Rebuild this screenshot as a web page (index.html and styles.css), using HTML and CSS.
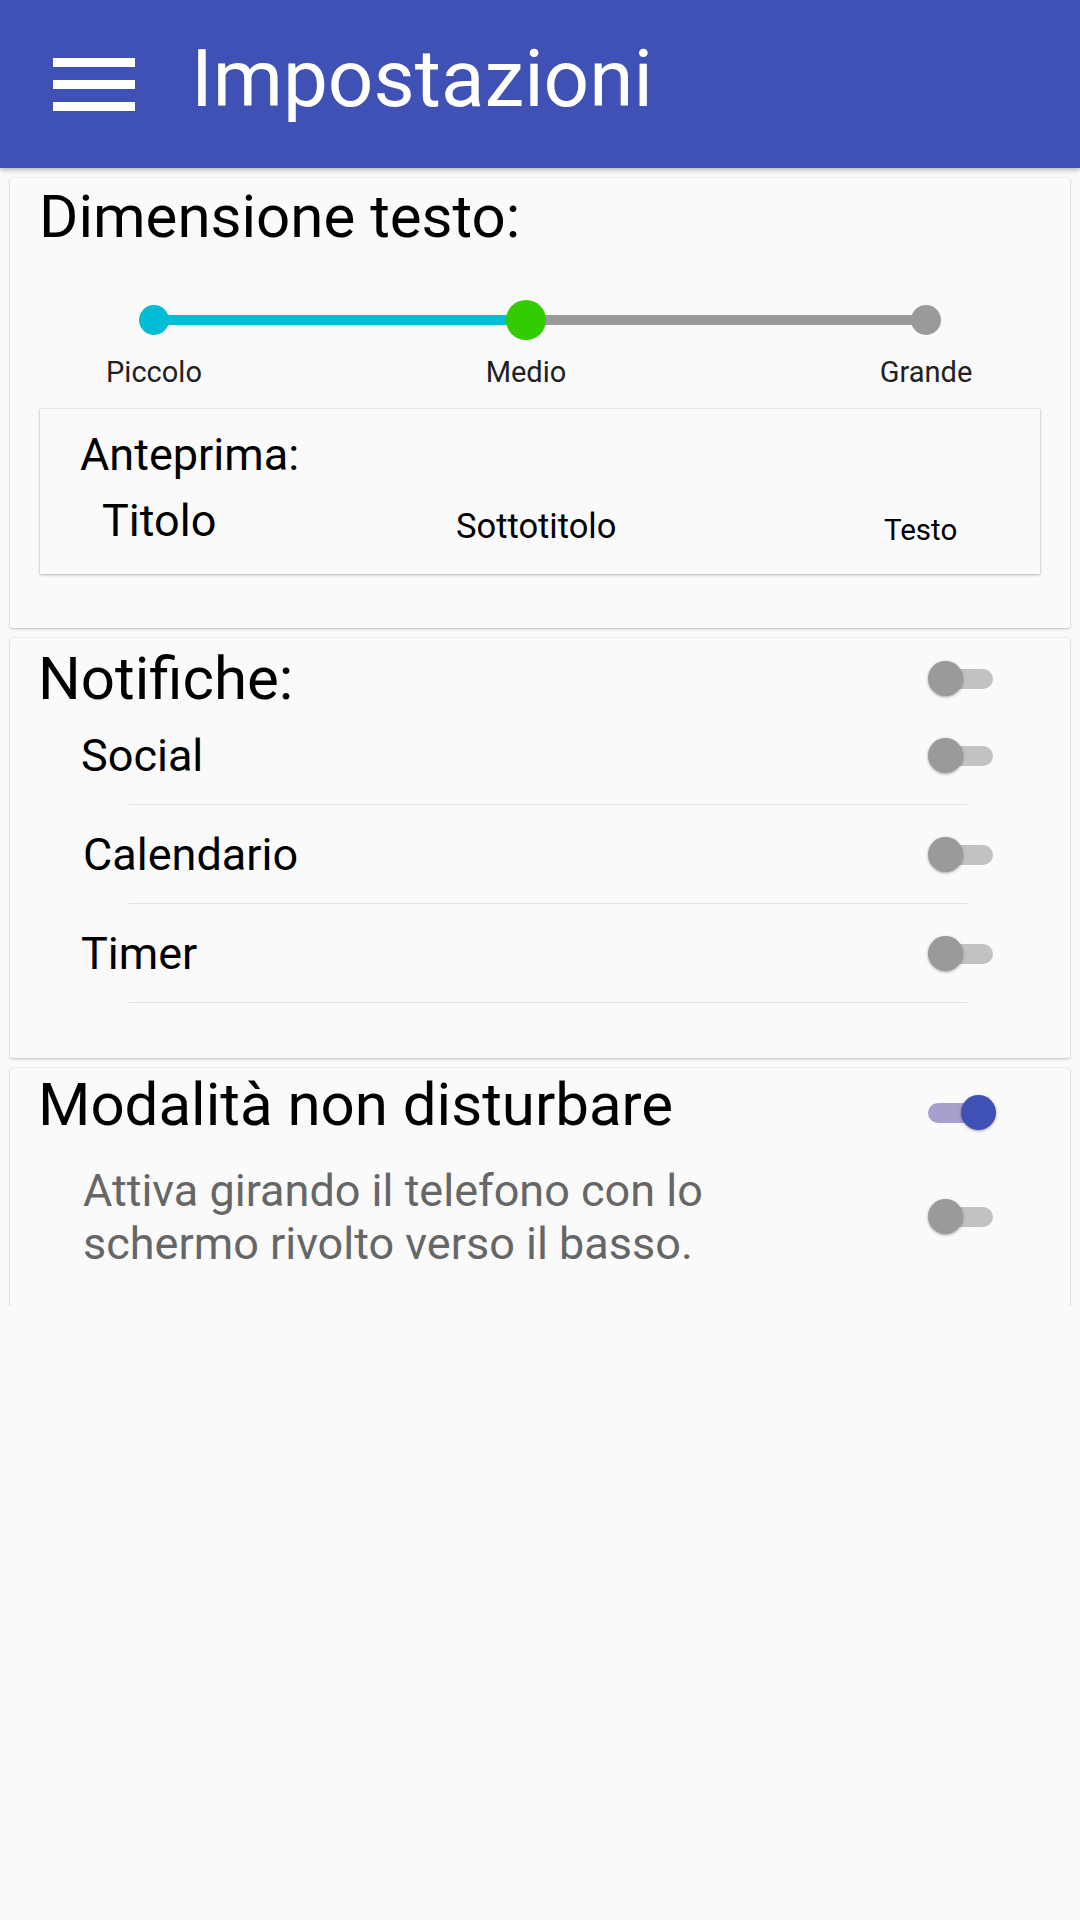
FILE: index.html
```html
<!DOCTYPE html>
<html lang="it">
<head>
<meta charset="utf-8">
<title>Impostazioni</title>
<link rel="stylesheet" href="styles.css">
</head>
<body>
<header class="appbar">
  <div class="menu" aria-label="menu"><span></span><span></span><span></span></div>
  <h1 class="appbar-title">Impostazioni</h1>
</header>

<main class="content">
  <section class="card card-size">
    <h2 class="card-heading">Dimensione testo:</h2>
    <div class="slider">
      <div class="slider-fill" style="width:48.19%"></div>
      <span class="dot dot-start"></span>
      <span class="dot dot-current" style="left:48.19%"></span>
      <span class="dot dot-end"></span>
    </div>
    <div class="slider-labels">
      <span class="lbl">Piccolo</span>
      <span class="lbl lbl-mid">Medio</span>
      <span class="lbl lbl-end">Grande</span>
    </div>
    <div class="preview">
      <div class="preview-label">Anteprima:</div>
      <div class="preview-row">
        <span class="pv-title">Titolo</span>
        <span class="pv-subtitle">Sottotitolo</span>
        <span class="pv-text">Testo</span>
      </div>
    </div>
  </section>

  <section class="card card-notif">
    <div class="head-row">
      <h2 class="card-heading">Notifiche:</h2>
      <span class="switch"><span class="track"></span><span class="thumb"></span></span>
    </div>
    <div class="item">
      <span class="item-label">Social</span>
      <span class="switch"><span class="track"></span><span class="thumb"></span></span>
    </div>
    <div class="divider"></div>
    <div class="item">
      <span class="item-label cal">Calendario</span>
      <span class="switch"><span class="track"></span><span class="thumb"></span></span>
    </div>
    <div class="divider"></div>
    <div class="item">
      <span class="item-label">Timer</span>
      <span class="switch"><span class="track"></span><span class="thumb"></span></span>
    </div>
    <div class="divider"></div>
  </section>

  <section class="card card-dnd">
    <div class="head-row dnd-head">
      <h2 class="card-heading">Modalità non disturbare</h2>
      <span class="switch on"><span class="track"></span><span class="thumb"></span></span>
    </div>
    <div class="dnd-row">
      <p class="dnd-desc">Attiva girando il telefono con lo schermo rivolto verso il basso.</p>
      <span class="switch"><span class="track"></span><span class="thumb"></span></span>
    </div>
  </section>
</main>
</body>
</html>
```

FILE: styles.css
```css
* { box-sizing: border-box; }

html, body {
  margin: 0;
  padding: 0;
  background: #fafafa;
  font-family: Roboto, "Noto Sans", "Liberation Sans", sans-serif;
  color: #000;
}

.appbar {
  height: 168px;
  background: #3f51b5;
  display: flex;
  align-items: center;
  padding-left: 53px;
  box-shadow: 0 2px 5px rgba(0,0,0,0.28);
  position: relative;
  z-index: 2;
}

.menu {
  width: 82px;
  display: flex;
  flex-direction: column;
  gap: 13px;
}
.menu span {
  display: block;
  height: 9px;
  background: #fff;
}

.appbar-title {
  margin: 0 0 10px 56px;
  font-weight: 400;
  font-size: 80px;
  line-height: 96px;
  color: #fff;
}

.content {
  padding: 10px 10px 0;
  display: flex;
  flex-direction: column;
  gap: 10px;
}

.card {
  background: #fafafa;
  box-shadow: 0 1px 3px rgba(0,0,0,0.22), 0 0 1px rgba(0,0,0,0.2);
  border-radius: 2px;
}

.card-heading {
  margin: 0;
  font-weight: 400;
  font-size: 60px;
  line-height: 70px;
  color: #000;
}

/* ---- card 1 ---- */
.card-size {
  padding: 4px 30px 54px;
}
.card-size .card-heading { margin-left: -1px; }

.slider {
  position: relative;
  height: 40px;
  margin: 48px 0 0 114px;
  width: 772px;
}
.slider::before {
  content: "";
  position: absolute;
  left: 0; right: 0;
  top: 15px;
  height: 10px;
  background: #9a9a9a;
}
.slider-fill {
  position: absolute;
  left: 0;
  top: 15px;
  height: 10px;
  background: #00bcd4;
}
.dot {
  position: absolute;
  top: 5px;
  width: 30px;
  height: 30px;
  margin-left: -15px;
  border-radius: 50%;
}
.dot-start { left: 0; background: #00bcd4; }
.dot-end { left: 100%; background: #9a9a9a; }
.dot-current {
  top: 0;
  width: 40px;
  height: 40px;
  margin-left: -20px;
  background: #33cc00;
}

.slider-labels {
  display: flex;
  margin: 14px 0 0 14px;
  font-size: 29px;
  line-height: 36px;
  color: #212121;
}
.lbl {
  width: 200px;
  flex: none;
  text-align: center;
}
.lbl-mid { margin-left: 172px; }
.lbl-end { margin-left: 200px; }

.preview {
  margin-top: 19px;
  background: #fafafa;
  box-shadow: 0 1px 3px rgba(0,0,0,0.25), 0 0 1px rgba(0,0,0,0.2);
  padding: 20px 0 22px 40px;
}
.preview-label {
  font-size: 45px;
  line-height: 52px;
  color: #000;
}
.preview-row {
  display: grid;
  grid-template-columns: 354px 429px auto;
  align-items: baseline;
  margin-top: 14px;
  padding-left: 22px;
  color: #000;
}
.pv-title { font-size: 45px; line-height: 52px; }
.pv-subtitle { font-size: 34.5px; line-height: 52px; position: relative; top: 2px; }
.pv-text { font-size: 29.5px; line-height: 52px; position: relative; top: 4px; margin-left: -1px; }

/* ---- switches ---- */
.switch {
  position: relative;
  flex: none;
  width: 66px;
  height: 36px;
}
.switch .track {
  position: absolute;
  left: 6px;
  top: 8px;
  width: 59px;
  height: 20px;
  border-radius: 10px;
  background: #c2c2c2;
}
.switch .thumb {
  position: absolute;
  left: 0;
  top: 0;
  width: 35px;
  height: 35px;
  border-radius: 50%;
  background: #9a9a9a;
  box-shadow: 0 1px 3px rgba(0,0,0,0.35);
}
.switch.on .track {
  left: 0;
  background: #a99fcc;
}
.switch.on .thumb {
  left: 33px;
  background: #3f51b5;
}

/* ---- card 2 ---- */
.card-notif {
  padding: 6px 76px 35px 28px;
}
.head-row {
  display: flex;
  align-items: center;
  justify-content: space-between;
}
.item {
  display: flex;
  align-items: center;
  justify-content: space-between;
  height: 60px;
  margin-left: 43px;
}
.head-row + .item { margin-top: 12px; }
.item-label {
  font-size: 45px;
  line-height: 60px;
}
.item-label.cal { margin-left: 2px; }
.divider {
  height: 1px;
  background: #e2e2e2;
  margin: 18px 27px 20px 91px;
}

/* ---- card 3 ---- */
.card-dnd {
  padding: 2px 76px 36px 28px;
}
.dnd-head {
  align-items: flex-start;
}
.dnd-head .switch { margin-top: 25px; }
.dnd-row {
  display: flex;
  align-items: center;
  justify-content: space-between;
  margin-top: 24px;
  padding-left: 45px;
}
.dnd-desc {
  margin: 0;
  width: 680px;
  font-size: 45px;
  line-height: 53px;
  color: #666;
}
```
